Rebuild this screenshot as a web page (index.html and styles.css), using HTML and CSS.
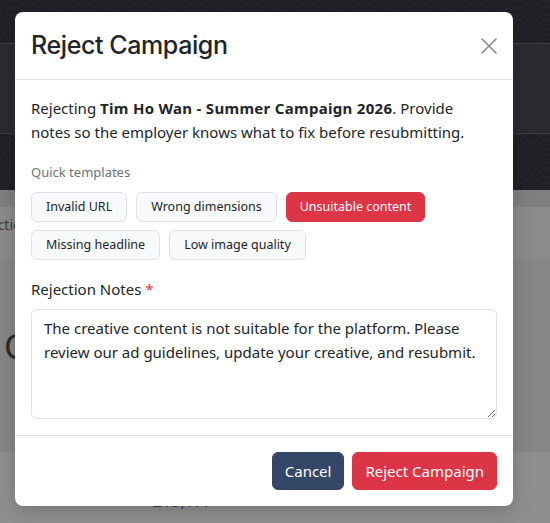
FILE: index.html
```html
<!DOCTYPE html>
<html lang="en">
<head>
<meta charset="utf-8">
<title>Reject Campaign</title>
<link rel="stylesheet" href="styles.css">
</head>
<body>
<div class="page">
  <header class="nav"></header>
  <div class="subnav"></div>
  <div class="hero"></div>
  <div class="strip"></div>
  <div class="tabs"><span class="tab-text">Transactions</span></div>
  <div class="main"><h2 class="page-title">Campaign Review</h2></div>
  <div class="totals"><span class="total-text">£13,177</span></div>
</div>

<div class="modal" role="dialog" aria-labelledby="modal-title">
  <div class="modal-header">
    <h5 class="modal-title" id="modal-title">Reject Campaign</h5>
    <button class="btn-close" type="button" aria-label="Close">
      <svg width="16" height="16" viewBox="0 0 16 16" aria-hidden="true">
        <path d="M1 1 L15 15 M15 1 L1 15" stroke="currentColor" stroke-width="1.6" fill="none" stroke-linecap="round"/>
      </svg>
    </button>
  </div>
  <div class="modal-body">
    <p class="intro">Rejecting <strong>Tim Ho Wan - Summer Campaign 2026</strong>. Provide notes so the employer knows what to fix before resubmitting.</p>
    <div class="tpl-label">Quick templates</div>
    <div class="chips">
      <button class="chip" type="button">Invalid URL</button>
      <button class="chip" type="button">Wrong dimensions</button>
      <button class="chip active" type="button">Unsuitable content</button>
      <button class="chip" type="button">Missing headline</button>
      <button class="chip" type="button">Low image quality</button>
    </div>
    <label class="field-label" for="notes">Rejection Notes <span class="req">*</span></label>
    <textarea id="notes" class="notes" rows="4">The creative content is not suitable for the platform. Please review our ad guidelines, update your creative, and resubmit.</textarea>
  </div>
  <div class="modal-footer">
    <button class="btn btn-cancel" type="button">Cancel</button>
    <button class="btn btn-reject" type="button">Reject Campaign</button>
  </div>
</div>
</body>
</html>
```
FILE: styles.css
```css
html, body {
  margin: 0;
  padding: 0;
}
body {
  width: 550px;
  height: 523px;
  overflow: hidden;
  font-family: "Noto Sans", "Open Sans", sans-serif;
  color: #212529;
  position: relative;
}

/* ---------- page behind the dialog (already dimmed) ---------- */
.page {
  display: flex;
  flex-direction: column;
}
.nav,
.hero {
  background-color: #1f2127;
  background-image:
    radial-gradient(circle at 50% 100%, transparent 7px, rgba(255,255,255,0.035) 8px, transparent 9px, transparent 12px, rgba(255,255,255,0.035) 13px, transparent 14px);
  background-size: 28px 14px;
}
.nav {
  height: 43px;
}
.subnav {
  height: 89px;
  background: #2a2b2f;
  border-top: 1px solid #3c3d42;
  border-bottom: 1px solid #3c3d42;
}
.hero {
  height: 56px;
}
.strip {
  height: 17px;
  background: #7f7f7f;
}
.tabs {
  height: 53px;
  box-sizing: border-box;
  padding-top: 8px;
  background: #8b8b8b;
  display: flex;
  align-items: flex-start;
}
.tab-text {
  margin-left: -46px;
  font-size: 14px;
  line-height: 20px;
  color: #3a3a3a;
  white-space: nowrap;
}
.main {
  height: 192px;
  background: #868686;
  padding-left: 4px;
  box-sizing: border-box;
  padding-top: 66px;
}
.page-title {
  margin: 0;
  font-size: 34px;
  line-height: 40px;
  font-weight: 400;
  color: #2a2a2a;
  white-space: nowrap;
}
.totals {
  height: 71px;
  background: #8f8f8f;
  padding-left: 153px;
  padding-top: 38px;
  box-sizing: border-box;
}
.total-text {
  font-size: 16px;
  line-height: 18px;
  color: #333;
}

/* ---------- dialog ---------- */
.modal {
  position: absolute;
  top: 12px;
  left: 15px;
  width: 498px;
  background: #fff;
  border-radius: 8px;
  box-shadow: 0 6px 20px rgba(0, 0, 0, 0.18);
}
.modal-header {
  display: flex;
  align-items: center;
  justify-content: space-between;
  padding: 16px;
  border-bottom: 1px solid #dee2e6;
}
.modal-title {
  margin: 0;
  font-family: "Inter", "Noto Sans", sans-serif;
  font-size: 25px;
  line-height: 35px;
  font-weight: 500;
  letter-spacing: -0.4px;
  color: #212529;
}
.btn-close {
  width: 16px;
  height: 16px;
  padding: 0;
  border: 0;
  background: none;
  color: #8a8a8a;
  display: flex;
}

.modal-body {
  padding: 16px;
}
.intro {
  margin: 0 0 18px;
  max-width: 450px;
  font-size: 15px;
  line-height: 24px;
}
.intro strong {
  font-weight: 700;
  letter-spacing: 0.3px;
}
.tpl-label {
  font-size: 13px;
  line-height: 21px;
  color: #6c757d;
  margin-bottom: 9px;
}
.chips {
  display: flex;
  flex-wrap: wrap;
  gap: 8px 9px;
  margin-bottom: 17px;
}
.chip {
  font-family: "Noto Sans", "Open Sans", sans-serif;
  font-size: 12.5px;
  line-height: 20px;
  padding: 4px 14px;
  border: 1px solid #dee2e6;
  background: #f8f9fa;
  border-radius: 6px;
  color: #212529;
}
.chip.active {
  background: #dc3545;
  border-color: #dc3545;
  color: #fff;
  padding: 4px 13px;
}
.field-label {
  display: block;
  font-size: 15px;
  line-height: 24px;
  margin-bottom: 8px;
}
.req {
  color: #dc3545;
}
.notes {
  display: block;
  width: 100%;
  box-sizing: border-box;
  height: 110px;
  margin: 0;
  padding: 6px 12px;
  font-family: "Noto Sans", "Open Sans", sans-serif;
  font-size: 15px;
  line-height: 24px;
  color: #212529;
  border: 1px solid #dee2e6;
  border-radius: 6px;
  resize: vertical;
  outline: none;
}

.modal-footer {
  display: flex;
  justify-content: flex-end;
  gap: 8px;
  padding: 16px;
  border-top: 1px solid #dee2e6;
}
.btn {
  font-family: "Noto Sans", "Open Sans", sans-serif;
  font-size: 15px;
  line-height: 24px;
  padding: 6px 12px;
  border: 1px solid transparent;
  border-radius: 6px;
  color: #fff;
}
.btn-cancel {
  background: #344767;
  border-color: #344767;
}
.btn-reject {
  background: #dc3545;
  border-color: #dc3545;
}
```
